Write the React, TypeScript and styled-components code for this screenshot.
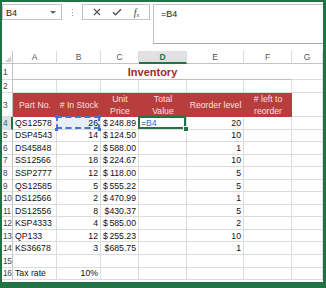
import { Fragment } from "react";
import styled, { createGlobalStyle, css } from "styled-components";

const GREEN = "#217346";
const GRID = "#dadcdd";
const HEAD_LINE = "#c3c3c3";
const RED = "#b83d3d";

const Global = createGlobalStyle`
  html, body { margin: 0; padding: 0; background: #fff; }
  body { font-family: "Liberation Sans", Arial, sans-serif; }
`;

const Frame = styled.div`
  width: 326px;
  height: 288px;
  box-sizing: border-box;
  border: solid ${GREEN};
  border-width: 2px 3px 6px 2px;
  background: #fff;
  overflow: hidden;
  display: flex;
  flex-direction: column;
`;

const FormulaBar = styled.div`
  display: flex;
  align-items: flex-start;
  height: 42px;
  padding-top: 2px;
  box-sizing: border-box;
  margin-bottom: 7px;
  font-size: 9px;
`;

const NameBox = styled.div`
  width: 60px;
  height: 16px;
  box-sizing: border-box;
  border: 1px solid ${HEAD_LINE};
  display: flex;
  align-items: center;
  justify-content: space-between;
  padding: 1px 5px 0 3px;
  color: #222;
`;

const DropArrow = styled.span`
  width: 0;
  height: 0;
  border-left: 3px solid transparent;
  border-right: 3px solid transparent;
  border-top: 3px solid #666;
`;

const Grip = styled.div`
  width: 20px;
  height: 16px;
  display: flex;
  flex-direction: column;
  align-items: center;
  justify-content: center;
  gap: 2px;
  span {
    width: 1px;
    height: 1px;
    background: #9a9a9a;
  }
`;

const Buttons = styled.div`
  width: 68px;
  height: 16px;
  box-sizing: border-box;
  border: 1px solid ${HEAD_LINE};
  display: flex;
  align-items: center;
  justify-content: space-around;
  padding: 0 4px;
  color: #555;
`;

const Fx = styled.span`
  font-family: "Liberation Serif", "Times New Roman", serif;
  font-style: italic;
  font-size: 10px;
  color: #444;
  sub {
    font-size: 6px;
    vertical-align: -1px;
  }
`;

const FormulaInput = styled.div`
  flex: 1;
  height: 40px;
  margin-left: 3px;
  box-sizing: border-box;
  border: 1px solid ${HEAD_LINE};
  border-right: none;
  border-bottom-color: #a9a9a9;
  padding: 4px 0 0 7px;
  color: #222;
`;

const Sheet = styled.div`
  display: grid;
  grid-template-columns: 11px 44px 44px 38px 48px 57px 48px 1fr;
  grid-template-rows: 13px 16px 13px 24px repeat(13, 12.55px);
  font-size: 8.7px;
  color: #111;
`;

const Corner = styled.div`
  border-right: 1px solid ${HEAD_LINE};
  border-bottom: 1px solid ${HEAD_LINE};
  display: flex;
  align-items: flex-end;
  justify-content: flex-end;
  padding: 0 1px 1px 0;
  &::after {
    content: "";
    border-left: 6px solid transparent;
    border-bottom: 6px solid #cfcfcf;
  }
`;

const ColHead = styled.div<{ $active?: boolean }>`
  border-right: 1px solid ${GRID};
  border-bottom: 1px solid ${HEAD_LINE};
  display: flex;
  align-items: center;
  justify-content: center;
  color: #555;
  font-size: 8.5px;
  ${({ $active }) =>
    $active &&
    css`
      background: #e1e1e1;
      color: ${GREEN};
      font-weight: bold;
      border-bottom: 2px solid ${GREEN};
    `}
`;

const RowHead = styled.div<{ $active?: boolean }>`
  border-right: 1px solid ${HEAD_LINE};
  border-bottom: 1px solid ${GRID};
  display: flex;
  align-items: center;
  padding-left: 1px;
  color: #444;
  font-size: 8.3px;
  letter-spacing: -0.4px;
  white-space: nowrap;
  ${({ $active }) =>
    $active &&
    css`
      background: #e1e1e1;
      color: ${GREEN};
      border-right: 2px solid ${GREEN};
    `}
`;

const Cell = styled.div<{ $align?: "left" | "right" }>`
  position: relative;
  border-right: 1px solid ${GRID};
  border-bottom: 1px solid ${GRID};
  display: flex;
  align-items: center;
  justify-content: ${({ $align }) => ($align === "right" ? "flex-end" : "flex-start")};
  padding: 0 2px;
  white-space: nowrap;
`;

const TitleCell = styled.div`
  grid-column: span 6;
  border-bottom: 1px solid #e6b1b0;
  display: flex;
  align-items: center;
  justify-content: center;
  color: #a3272b;
  font-weight: bold;
  font-size: 11px;
`;

const HeadCell = styled.div`
  background: ${RED};
  color: #f7e0e0;
  display: flex;
  align-items: center;
  justify-content: center;
  text-align: center;
  white-space: pre-line;
  line-height: 12.5px;
`;

const PriceCell = styled(Cell)<{ $compact?: boolean }>`
  justify-content: ${({ $compact }) => ($compact ? "flex-end" : "space-between")};
`;

const CopyCell = styled(Cell)`
  background: #e8eef8;
  &::after {
    content: "";
    position: absolute;
    inset: -1px 0 0 -1px;
    border: 2px dashed #4a74cc;
  }
`;

const Handle = styled.i<{ $pos: "tl" | "tr" | "bl" | "br" }>`
  position: absolute;
  width: 3px;
  height: 3px;
  background: #3f6fd0;
  z-index: 2;
  ${({ $pos }) => ($pos[0] === "t" ? "top: -2px;" : "bottom: -2px;")}
  ${({ $pos }) => ($pos[1] === "l" ? "left: -2px;" : "right: -1px;")}
`;

const ActiveCell = styled(Cell)`
  &::after {
    content: "";
    position: absolute;
    inset: -1px 0 0 -1px;
    border: 2px solid ${GREEN};
  }
`;

const FillHandle = styled.i`
  position: absolute;
  right: -3px;
  bottom: -3px;
  width: 4px;
  height: 4px;
  background: ${GREEN};
  border: 1px solid #fff;
  z-index: 2;
`;

const RefText = styled.span`
  color: #3a67c9;
`;

type Item = { part: string; stock: string; price: string; compact?: boolean; reorder: string };

const items: Item[] = [
  { part: "QS12578", stock: "26", price: "248.89", reorder: "20" },
  { part: "DSP4543", stock: "14", price: "124.50", reorder: "10" },
  { part: "DS45848", stock: "2", price: "588.00", reorder: "1" },
  { part: "SS12566", stock: "18", price: "224.67", reorder: "10" },
  { part: "SSP2777", stock: "12", price: "118.00", reorder: "5" },
  { part: "QS12585", stock: "5", price: "555.22", reorder: "5" },
  { part: "DS12566", stock: "2", price: "470.99", reorder: "1" },
  { part: "DS12556", stock: "8", price: "430.37", compact: true, reorder: "5" },
  { part: "KSP4333", stock: "4", price: "585.00", reorder: "2" },
  { part: "QP133", stock: "12", price: "255.23", reorder: "10" },
  { part: "KS36678", stock: "3", price: "685.75", compact: true, reorder: "1" },
];

const columns = ["A", "B", "C", "D", "E", "F", "G"];
const headers = ["Part No.", "# In Stock", "Unit\nPrice", "Total\nValue", "Reorder level", "# left to\nreorder"];

const XIcon = () => (
  <svg width="8" height="8" viewBox="0 0 8 8">
    <path d="M1 1L7 7M7 1L1 7" stroke="#555" strokeWidth="1.2" />
  </svg>
);

const CheckIcon = () => (
  <svg width="10" height="8" viewBox="0 0 10 8">
    <path d="M1 4.2L3.6 6.8L9 1.2" stroke="#555" strokeWidth="1.4" fill="none" />
  </svg>
);

const Blank = ({ n }: { n: number }) => (
  <>
    {Array.from({ length: n }).map((_, i) => (
      <Cell key={i} />
    ))}
  </>
);

export default function App() {
  return (
    <Frame>
      <Global />
      <FormulaBar>
        <NameBox>
          B4
          <DropArrow />
        </NameBox>
        <Grip>
          <span />
          <span />
          <span />
        </Grip>
        <Buttons>
          <XIcon />
          <CheckIcon />
          <Fx>
            f<sub>x</sub>
          </Fx>
        </Buttons>
        <FormulaInput>=B4</FormulaInput>
      </FormulaBar>

      <Sheet>
        <Corner />
        {columns.map((c) => (
          <ColHead key={c} $active={c === "D"}>
            {c}
          </ColHead>
        ))}

        <RowHead>1</RowHead>
        <TitleCell>Inventory</TitleCell>
        <Cell />

        <RowHead>2</RowHead>
        <Blank n={7} />

        <RowHead>3</RowHead>
        {headers.map((h) => (
          <HeadCell key={h}>{h}</HeadCell>
        ))}
        <Cell />

        {items.map((it, i) => {
          const first = i === 0;
          return (
            <Fragment key={it.part}>
              <RowHead $active={first}>{i + 4}</RowHead>
              <Cell>{it.part}</Cell>
              {first ? (
                <CopyCell $align="right">
                  {it.stock}
                  <Handle $pos="tl" />
                  <Handle $pos="tr" />
                  <Handle $pos="bl" />
                  <Handle $pos="br" />
                </CopyCell>
              ) : (
                <Cell $align="right">{it.stock}</Cell>
              )}
              <PriceCell $compact={it.compact}>
                {it.compact ? (
                  `$${it.price}`
                ) : (
                  <>
                    <span>$</span>
                    <span>{it.price}</span>
                  </>
                )}
              </PriceCell>
              {first ? (
                <ActiveCell>
                  =<RefText>B4</RefText>
                  <FillHandle />
                </ActiveCell>
              ) : (
                <Cell />
              )}
              <Cell $align="right">{it.reorder}</Cell>
              <Blank n={2} />
            </Fragment>
          );
        })}

        <RowHead>15</RowHead>
        <Blank n={7} />

        <RowHead>16</RowHead>
        <Cell>Tax rate</Cell>
        <Cell $align="right">10%</Cell>
        <Blank n={5} />
      </Sheet>
    </Frame>
  );
}
